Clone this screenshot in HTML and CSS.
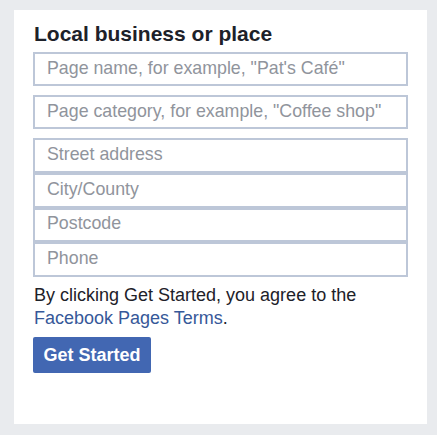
FILE: index.html
```html
<!DOCTYPE html>
<html>
<head>
<meta charset="utf-8">
<link rel="stylesheet" href="styles.css">
</head>
<body>
<div class="card">
  <h2 class="title">Local business or place</h2>
  <div class="field"><span class="ph">Page name, for example, "Pat's Café"</span></div>
  <div class="field"><span class="ph">Page category, for example, "Coffee shop"</span></div>
  <div class="group">
    <div class="field"><span class="ph">Street address</span></div>
    <div class="field"><span class="ph">City/County</span></div>
    <div class="field"><span class="ph">Postcode</span></div>
    <div class="field"><span class="ph">Phone</span></div>
  </div>
  <p class="terms">By clicking Get Started, you agree to the <a class="link" href="#">Facebook Pages Terms</a>.</p>
  <button class="btn" type="button">Get Started</button>
</div>
</body>
</html>
```
FILE: styles.css
```css
html, body {
  margin: 0;
  padding: 0;
  background: #e9ebee;
}
body {
  padding: 10px 10px 11px 14px;
  font-family: "Liberation Sans", Arial, sans-serif;
}
.card {
  background: #fff;
  width: 413px;
  height: 414px;
  box-sizing: border-box;
  padding: 11px 19px 0 19px;
}
.title {
  margin: 0 0 6px 1px;
  font-size: 21px;
  line-height: 25px;
  font-weight: bold;
  color: #1d2129;
}
.field {
  box-sizing: border-box;
  height: 34px;
  border: 2px solid #bdc7d8;
  background: #fff;
  padding: 0 12px 2px;
  display: flex;
  align-items: center;
  margin-bottom: 9px;
}
.ph {
  font-size: 17.8px;
  color: #90949c;
  white-space: nowrap;
}
.group {
  display: flex;
  flex-direction: column;
}
.group .field {
  height: 34.75px;
  margin-bottom: 0;
}
.terms {
  margin: 7px 0 7px 1px;
  font-size: 18px;
  line-height: 23px;
  color: #1d2129;
}
.link {
  color: #365899;
  text-decoration: none;
}
.btn {
  width: 118px;
  height: 36px;
  border: none;
  border-radius: 2px;
  background: #4267b2;
  color: #fff;
  font-family: "Liberation Sans", Arial, sans-serif;
  font-weight: bold;
  font-size: 18px;
  padding: 0;
}
```
